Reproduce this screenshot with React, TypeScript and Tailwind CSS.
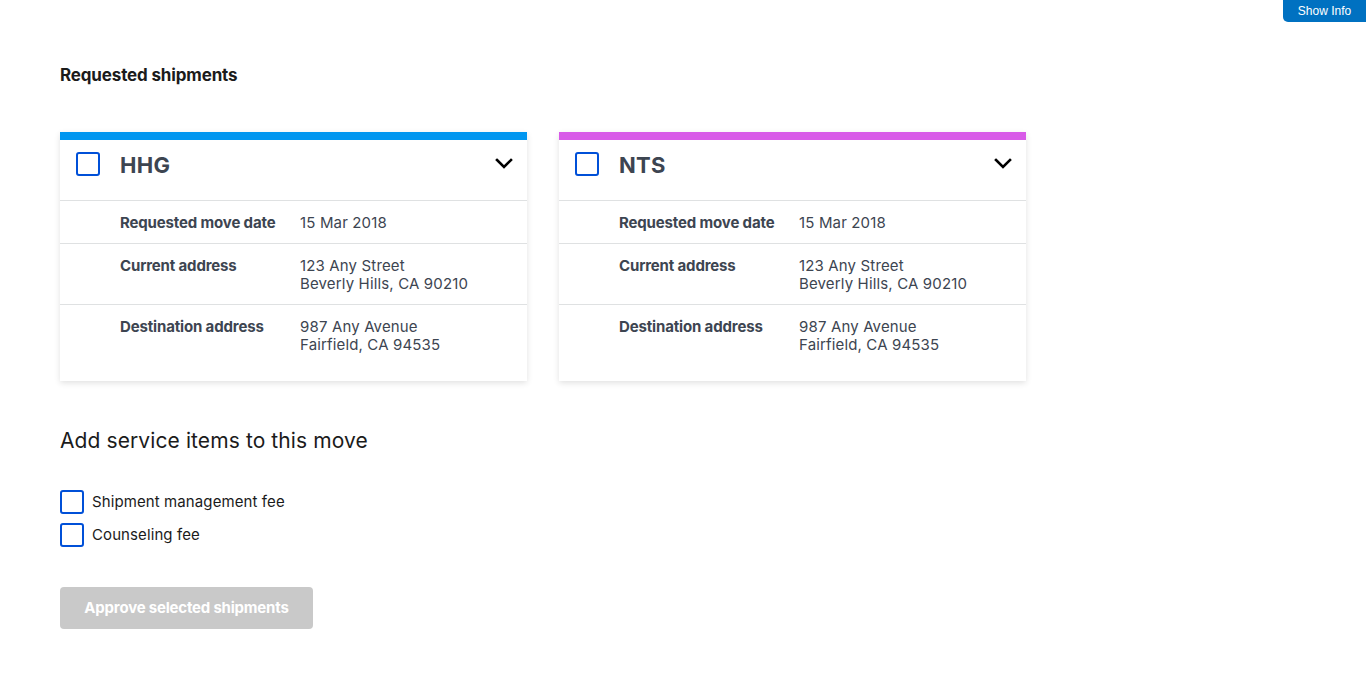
import React from "react";

type Shipment = {
  type: string;
  color: string;
  date: string;
  current: string[];
  destination: string[];
};

const shipments: Shipment[] = [
  {
    type: "HHG",
    color: "bg-[#0096f0]",
    date: "15 Mar 2018",
    current: ["123 Any Street", "Beverly Hills, CA 90210"],
    destination: ["987 Any Avenue", "Fairfield, CA 94535"],
  },
  {
    type: "NTS",
    color: "bg-[#d85ae8]",
    date: "15 Mar 2018",
    current: ["123 Any Street", "Beverly Hills, CA 90210"],
    destination: ["987 Any Avenue", "Fairfield, CA 94535"],
  },
];

function Box() {
  return <span className="block w-6 h-6 rounded-[3px] border-2 border-[#0050d8] bg-white flex-shrink-0" />;
}

function Chevron() {
  return (
    <svg width="18" height="12" viewBox="0 0 18 12" fill="none" stroke="#000" strokeWidth="2.6" strokeLinecap="square">
      <path d="M2 3l7 7 7-7" />
    </svg>
  );
}

function Row({ label, lines, last }: { label: string; lines: string[]; last?: boolean }) {
  return (
    <div className={`flex pl-[60px] pt-[13px] ${last ? "pb-[27px]" : "pb-[11px] border-b border-[#dfe1e2]"}`}>
      <div className="w-[180px] font-bold text-[#3d4551] tracking-[-0.15px]">{label}</div>
      <div className="text-[#3d4551] tracking-[0.15px]">
        {lines.map((l) => (
          <div key={l}>{l}</div>
        ))}
      </div>
    </div>
  );
}

function ShipmentCard({ s }: { s: Shipment }) {
  return (
    <div className="w-[467px] bg-white shadow-[0_2px_6px_rgba(0,0,0,0.12)]">
      <div className={`h-2 ${s.color}`} />
      <div className="flex items-start h-[61px] pt-3 px-4 border-b border-[#dfe1e2]">
        <Box />
        <span className="ml-5 text-[22px] leading-[26px] font-bold text-[#3d4551] tracking-[0.3px]">{s.type}</span>
        <span className="ml-auto mt-[5px] mr-[-2px]">
          <Chevron />
        </span>
      </div>
      <div className="text-[15px] leading-[18px]">
        <Row label="Requested move date" lines={[s.date]} />
        <Row label="Current address" lines={s.current} />
        <Row label="Destination address" lines={s.destination} last />
      </div>
    </div>
  );
}

export default function App() {
  return (
    <div className="min-h-[697px] bg-white text-[#1b1b1b]" style={{ fontFamily: "Inter, 'Noto Sans', sans-serif" }}>
      <div className="flex justify-end">
        <button className="h-[22px] w-[83px] bg-[#0071c1] text-white text-[12px] rounded-bl-[5px]" style={{ fontFamily: "'Liberation Sans', Arial, sans-serif" }}>
          Show Info
        </button>
      </div>
      <div className="px-[60px]">
        <h2 className="mt-[42px] text-[17px] font-bold leading-[22px] tracking-[-0.15px]">Requested shipments</h2>
        <div className="flex gap-8 mt-[46px]">
          {shipments.map((s) => (
            <ShipmentCard key={s.type} s={s} />
          ))}
        </div>
        <h3 className="mt-[45px] text-[21px] leading-[30px] tracking-[0.1px]">Add service items to this move</h3>
        <div className="mt-[34px] flex flex-col gap-[9px] text-[15px]">
          {["Shipment management fee", "Counseling fee"].map((t) => (
            <label key={t} className="flex items-center gap-2">
              <Box />
              <span className="tracking-[0.1px]">{t}</span>
            </label>
          ))}
        </div>
        <button className="mt-[40px] h-[42px] w-[253px] rounded bg-[#c9c9c9] text-white font-bold text-[15px] tracking-[-0.2px]">
          Approve selected shipments
        </button>
      </div>
    </div>
  );
}
